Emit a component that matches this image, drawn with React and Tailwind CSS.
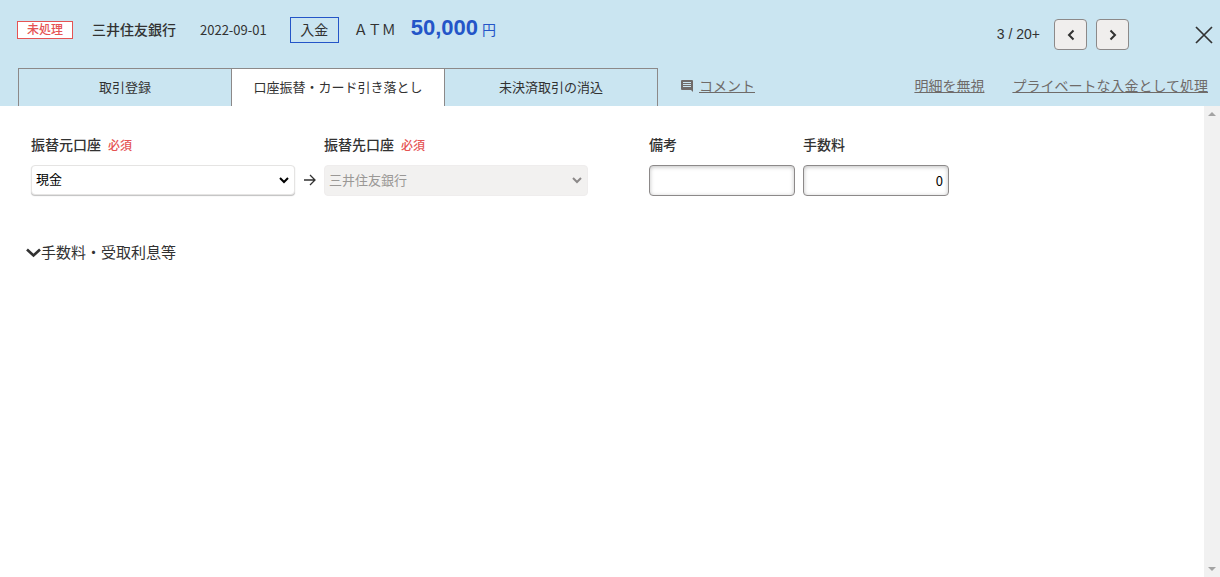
import { useState } from 'react';
import { clsx } from 'clsx';

const TABS = ['取引登録', '口座振替・カード引き落とし', '未決済取引の消込'];

const inputClass =
  "block h-[31px] w-full rounded border border-[#8c8989] bg-white px-[5px] font-['Noto_Sans_CJK_JP',sans-serif] text-[13px] text-black shadow-[inset_0_1px_4px_rgba(0,0,0,0.25)]";

function Chevron({ className }) {
  return (
    <svg viewBox="0 0 10 7" className={className} fill="none" stroke="currentColor" strokeWidth="2" aria-hidden="true">
      <path d="M1 1l4 4 4-4" />
    </svg>
  );
}

function Arrow({ direction }) {
  return (
    <svg viewBox="0 0 8 12" className="h-3 w-2" fill="none" stroke="currentColor" strokeWidth="2" aria-hidden="true">
      <path d={direction === 'prev' ? 'M6.5 1.5L2 6l4.5 4.5' : 'M1.5 1.5L6 6l-4.5 4.5'} />
    </svg>
  );
}

function FieldLabel({ htmlFor, required, children }) {
  return (
    <label htmlFor={htmlFor} className="mb-2.5 block text-sm leading-5 font-medium whitespace-nowrap">
      {children}
      {required && <span className="ml-[7px] text-xs text-[#e55353]">必須</span>}
    </label>
  );
}

function AccountSelect({ id, options, disabled }) {
  return (
    <div className="relative">
      <select
        id={id}
        disabled={disabled}
        className={clsx(
          'block w-full appearance-none rounded border pr-6 pl-1 text-[13px]',
          disabled
            ? 'h-[31px] border-[#efeded] bg-[#f2f1f0] text-[#9a9896]'
            : 'h-[30px] border-[#e5e4e3] bg-white text-black shadow-[0_1px_1px_rgba(0,0,0,0.25)]'
        )}
      >
        {options.map((option) => (
          <option key={option}>{option}</option>
        ))}
      </select>
      <Chevron
        className={clsx('pointer-events-none absolute top-3 right-1.5 h-[7px] w-2.5', disabled ? 'text-[#8c8989]' : 'text-black')}
      />
    </div>
  );
}

function Header({ activeTab, onTabChange }) {
  return (
    <header className="bg-[#cae5f1]">
      <div className="flex h-[68px] items-start pr-1.5 pl-[17px]">
        <div className="flex h-15 items-center">
          <span className="flex h-[18px] w-14 items-center justify-center border border-[#e55353] bg-white text-xs font-medium text-[#e55353]">
            未処理
          </span>
          <span className="ml-[19px] text-sm font-medium">三井住友銀行</span>
          <time dateTime="2022-09-01" className="ml-6 font-['Noto_Sans_CJK_JP',sans-serif] text-[13px]">2022-09-01</time>
          <span className="ml-[23px] flex h-[26px] w-[49px] items-center justify-center border border-[#2455c8] text-sm">入金</span>
          <span className="ml-[15px] text-sm">ＡＴＭ</span>
          <span className="ml-[15px] pb-1.5 text-[22px] font-bold text-[#2455c8]">
            50,000<span className="ml-1 text-sm font-normal">円</span>
          </span>
        </div>
        <div className="ml-auto flex items-center pt-[19px]">
          <span className="mr-3.5 pb-0.5 text-sm">3 / 20+</span>
          <button type="button" aria-label="前へ" className="mr-[9px] flex h-[31px] w-[33px] items-center justify-center rounded border border-[#8c8989] bg-[#f0eeed]">
            <Arrow direction="prev" />
          </button>
          <button type="button" aria-label="次へ" className="mr-[65px] flex h-[31px] w-[33px] items-center justify-center rounded border border-[#8c8989] bg-[#f0eeed]">
            <Arrow direction="next" />
          </button>
          <button type="button" aria-label="閉じる">
            <svg viewBox="0 0 20 20" className="h-5 w-5" stroke="currentColor" strokeWidth="1.7" aria-hidden="true">
              <path d="M2 2l16 16M18 2L2 18" />
            </svg>
          </button>
        </div>
      </div>
      <div className="flex h-[38px] items-stretch pr-3 pl-[18px]">
        <div role="tablist" className="flex w-[640px] border-r border-[#8c8989]">
          {TABS.map((tab, i) => (
            <button
              key={tab}
              type="button"
              role="tab"
              aria-selected={activeTab === i}
              onClick={() => onTabChange(i)}
              className={clsx('flex-1 border-t border-l border-[#8c8989] text-[13px] whitespace-nowrap', activeTab === i && 'bg-white')}
            >
              {tab}
            </button>
          ))}
        </div>
        <nav className="flex flex-1 items-center pb-0.5 text-sm whitespace-nowrap text-[#6f6b69]">
          <a href="#comment" className="ml-[23px] flex items-center gap-1.5">
            <svg viewBox="0 0 12 12" className="h-3 w-3" aria-hidden="true">
              <path d="M1 0h10a1 1 0 011 1v11l-2-2H1a1 1 0 01-1-1V1a1 1 0 011-1z" fill="currentColor" />
              <path d="M2 2.5h8M2 4.5h8M2 6.5h8" stroke="#cae5f1" />
            </svg>
            <span className="underline">コメント</span>
          </a>
          <a href="#ignore" className="ml-auto underline">明細を無視</a>
          <a href="#private" className="ml-7 underline">プライベートな入金として処理</a>
        </nav>
      </div>
    </header>
  );
}

function TransferForm() {
  return (
    <form className="min-w-0 flex-1 px-[31px] pt-[29px]">
      <div className="flex items-start">
        <div className="w-[264px]">
          <FieldLabel htmlFor="from" required>振替元口座</FieldLabel>
          <AccountSelect id="from" options={['現金', '三井住友銀行']} />
        </div>
        <div className="flex w-[29px] justify-center pt-[39px]">
          <svg viewBox="0 0 12 12" className="h-3 w-3" fill="none" stroke="currentColor" strokeWidth="1.3" aria-hidden="true">
            <path d="M0 6h11M6 1l5 5-5 5" />
          </svg>
        </div>
        <div className="w-[264px]">
          <FieldLabel htmlFor="to" required>振替先口座</FieldLabel>
          <AccountSelect id="to" options={['三井住友銀行']} disabled />
        </div>
        <div className="ml-[61px] w-[146px]">
          <FieldLabel htmlFor="note">備考</FieldLabel>
          <input id="note" type="text" className={inputClass} />
        </div>
        <div className="ml-2 w-[146px]">
          <FieldLabel htmlFor="fee">手数料</FieldLabel>
          <input id="fee" type="text" defaultValue="0" className={clsx(inputClass, 'text-right')} />
        </div>
      </div>
      <button type="button" className="mt-[46px] -ml-[5px] flex items-center text-[15px]">
        <svg viewBox="0 0 15 10" className="h-2.5 w-[15px]" fill="none" stroke="currentColor" strokeWidth="2.6" aria-hidden="true">
          <path d="M1 1.5l6.5 6 6.5-6" />
        </svg>
        手数料・受取利息等
      </button>
    </form>
  );
}

function ScrollTrack() {
  return (
    <div className="flex w-4 flex-col items-center justify-between bg-[#f1f1f1] py-1.5 text-[#a3a3a3]" aria-hidden="true">
      <svg viewBox="0 0 8 4" className="h-1 w-2" fill="currentColor">
        <path d="M0 4l4-4 4 4z" />
      </svg>
      <svg viewBox="0 0 8 4" className="h-1 w-2" fill="currentColor">
        <path d="M0 0l4 4 4-4z" />
      </svg>
    </div>
  );
}

export default function App() {
  const [activeTab, setActiveTab] = useState(1);

  return (
    <div
      lang="ja"
      className="flex min-h-screen flex-col bg-white font-['Liberation_Sans','Noto_Sans_CJK_JP',sans-serif] text-[#323232]"
    >
      <Header activeTab={activeTab} onTabChange={setActiveTab} />
      <main className="flex flex-1">
        <TransferForm />
        <ScrollTrack />
      </main>
    </div>
  );
}
